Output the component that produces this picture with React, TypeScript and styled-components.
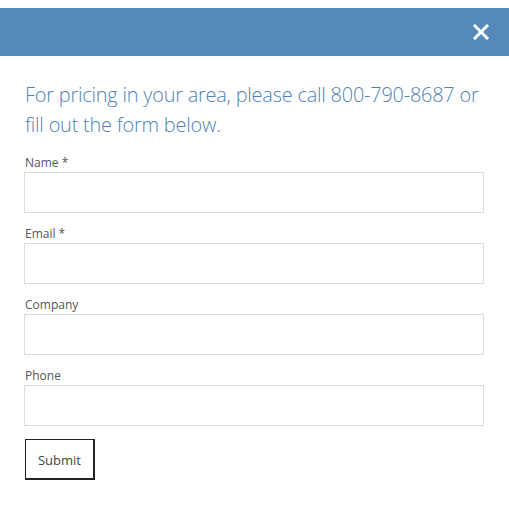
import React from "react";
import styled, { createGlobalStyle } from "styled-components";

const GlobalStyle = createGlobalStyle`
  html, body {
    margin: 0;
    padding: 0;
    background: #ffffff;
  }
  body {
    font-family: "Open Sans", "Liberation Sans", sans-serif;
  }
`;

const Modal = styled.div`
  padding-top: 8px;
  width: 509px;
`;

const Header = styled.div`
  height: 48px;
  background: #5689bb;
  display: flex;
  align-items: center;
  justify-content: flex-end;
  padding-right: 18px;
`;

const CloseButton = styled.button`
  border: none;
  background: transparent;
  padding: 0;
  width: 20px;
  height: 20px;
  display: flex;
  align-items: center;
  justify-content: center;
  cursor: pointer;
`;

const Body = styled.div`
  padding: 24px 25px 0 24px;
`;

const Intro = styled.h2`
  margin: 0 0 15px 1px;
  font-family: "Open Sans", "Liberation Sans", sans-serif;
  font-weight: 300;
  font-size: 19.9px;
  line-height: 30px;
  color: #4f82b8;
  letter-spacing: -0.2px;
`;

const Form = styled.form`
  display: flex;
  flex-direction: column;
  gap: 13px;
`;

const Field = styled.div`
  display: flex;
  flex-direction: column;
`;

const Label = styled.label`
  font-size: 12px;
  line-height: 15px;
  padding-bottom: 2px;
  color: #555;
  margin-left: 1px;
`;

const Input = styled.input`
  box-sizing: border-box;
  width: 460px;
  height: 41px;
  border: 1px solid #d8dde3;
  background: #fff;
  outline: none;
`;

const Submit = styled.button`
  box-sizing: border-box;
  margin-top: 0;
  margin-left: 1px;
  width: 70px;
  height: 41px;
  padding-top: 3px;
  border: 1px solid #222;
  border-right-width: 2px;
  border-bottom-width: 2px;
  background: #fff;
  font-family: "Open Sans", "Liberation Sans", sans-serif;
  font-size: 13px;
  color: #444;
  cursor: pointer;
  align-self: flex-start;
`;

const fields = ["Name *", "Email *", "Company", "Phone"];

export default function App() {
  return (
    <>
      <GlobalStyle />
      <Modal>
        <Header>
          <CloseButton aria-label="Close">
            <svg width="16" height="16" viewBox="0 0 16 16">
              <path
                d="M2 2 L14 14 M14 2 L2 14"
                stroke="#fff"
                strokeWidth="3"
                strokeLinecap="square"
              />
            </svg>
          </CloseButton>
        </Header>
        <Body>
          <Intro>
            For pricing in your area, please call 800-790-8687 or fill out the
            form below.
          </Intro>
          <Form onSubmit={(e) => e.preventDefault()}>
            {fields.map((f) => (
              <Field key={f}>
                <Label>{f}</Label>
                <Input type="text" />
              </Field>
            ))}
            <Submit type="submit">Submit</Submit>
          </Form>
        </Body>
      </Modal>
    </>
  );
}
